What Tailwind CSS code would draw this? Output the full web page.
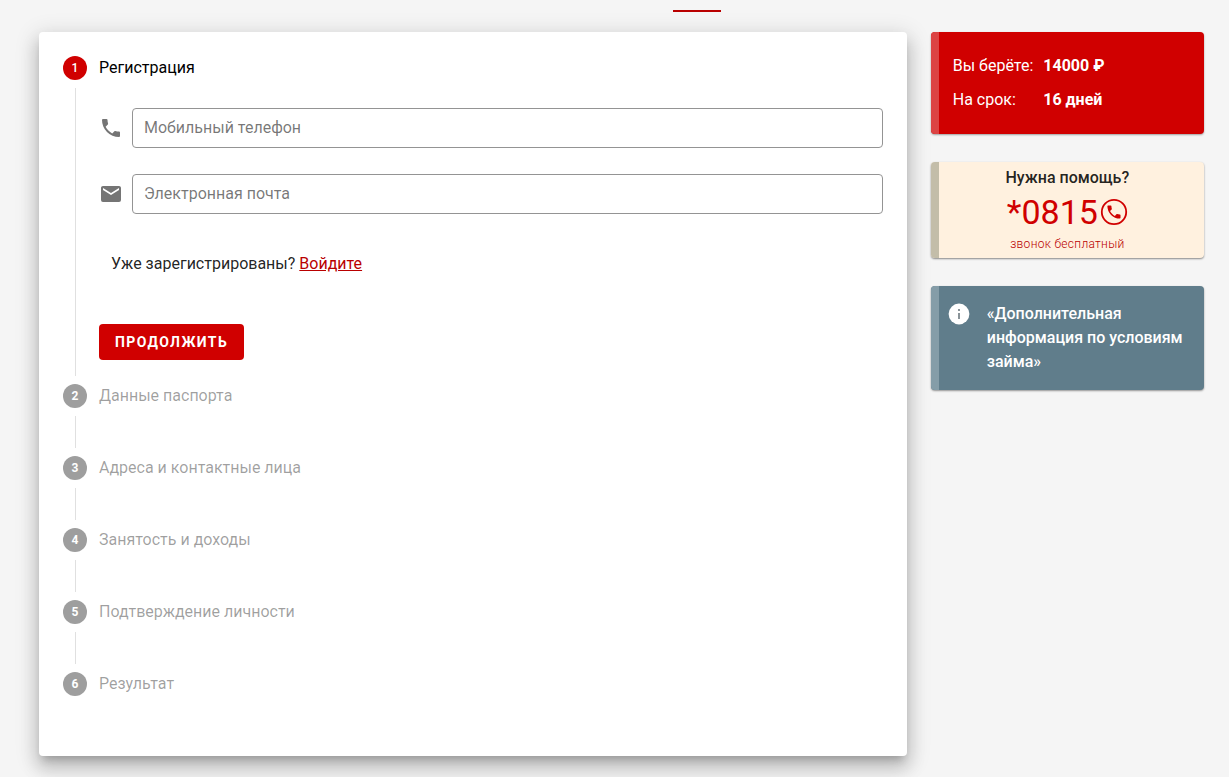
<!DOCTYPE html>
<html lang="ru">
<head>
<meta charset="utf-8">
<meta name="viewport" content="width=device-width, initial-scale=1">
<title>Регистрация</title>
<script src="https://cdn.jsdelivr.net/npm/@tailwindcss/browser@4"></script>
</head>
<body class="min-h-screen bg-[#f5f5f5] font-['Roboto',sans-serif] text-base text-black/87">
<div class="flex h-3 items-end justify-center pl-[165px]" aria-hidden="true">
  <div class="h-0.5 w-12 bg-[#b90000]"></div>
</div>
<div class="grid grid-cols-4 items-start gap-6 pt-5 pr-[25px] pb-5 pl-[39px]">
  <main class="col-span-3 rounded bg-white px-6 pt-6 pb-[60px] shadow-[0_7px_8px_-4px_rgba(0,0,0,0.2),0_12px_17px_2px_rgba(0,0,0,0.14),0_5px_22px_4px_rgba(0,0,0,0.12)]">
    <ol>
      <li class="flex gap-3">
        <div class="flex w-6 shrink-0 flex-col">
          <span class="flex size-6 items-center justify-center rounded-full bg-[#d00000] text-xs font-medium text-white">1</span>
          <span class="my-2 ml-3 w-px flex-1 bg-black/12"></span>
        </div>
        <div class="min-w-0 flex-1 pb-6">
          <h2 class="leading-6 text-black">Регистрация</h2>
          <form>
            <div class="mt-7 flex items-center gap-[9px]">
              <svg class="size-6 shrink-0 fill-[#757575]" viewBox="0 0 24 24" aria-hidden="true"><path d="M6.62 10.79C8.06 13.62 10.38 15.94 13.21 17.38L15.41 15.18C15.69 14.9 16.08 14.82 16.43 14.93C17.55 15.3 18.75 15.5 20 15.5A1 1 0 0 1 21 16.5V20A1 1 0 0 1 20 21A17 17 0 0 1 3 4A1 1 0 0 1 4 3H7.5A1 1 0 0 1 8.5 4C8.5 5.25 8.7 6.45 9.07 7.57C9.18 7.92 9.1 8.31 8.82 8.59L6.62 10.79Z"/></svg>
              <input type="tel" aria-label="Мобильный телефон" placeholder="Мобильный телефон" class="h-10 min-w-0 flex-1 rounded border border-[#949494] px-[11px] pb-0.5 placeholder:text-black/54">
            </div>
            <div class="mt-[26px] flex items-center gap-[9px]">
              <svg class="size-6 shrink-0 fill-[#757575]" viewBox="0 0 24 24" aria-hidden="true"><path d="M20 8L12 13L4 8V6L12 11L20 6M20 4H4C2.89 4 2 4.89 2 6V18A2 2 0 0 0 4 20H20A2 2 0 0 0 22 18V6C22 4.89 21.1 4 20 4Z"/></svg>
              <input type="email" aria-label="Электронная почта" placeholder="Электронная почта" class="h-10 min-w-0 flex-1 rounded border border-[#949494] px-[11px] pb-0.5 placeholder:text-black/54">
            </div>
            <p class="mt-[38px] ml-3 leading-6">Уже зарегистрированы? <a href="#" class="text-[#b90000] underline">Войдите</a></p>
            <button type="submit" class="mt-12 block h-9 rounded bg-[#d00000] px-4 text-sm font-bold tracking-widest text-white uppercase">Продолжить</button>
          </form>
        </div>
      </li>
      <li class="flex h-[72px] gap-3">
        <div class="flex w-6 shrink-0 flex-col">
          <span class="flex size-6 items-center justify-center rounded-full bg-[#9e9e9e] text-xs font-bold text-white">2</span>
          <span class="my-2 ml-3 w-px flex-1 bg-black/12"></span>
        </div>
        <h2 class="leading-6 text-black/38">Данные паспорта</h2>
      </li>
      <li class="flex h-[72px] gap-3">
        <div class="flex w-6 shrink-0 flex-col">
          <span class="flex size-6 items-center justify-center rounded-full bg-[#9e9e9e] text-xs font-bold text-white">3</span>
          <span class="my-2 ml-3 w-px flex-1 bg-black/12"></span>
        </div>
        <h2 class="leading-6 text-black/38">Адреса и контактные лица</h2>
      </li>
      <li class="flex h-[72px] gap-3">
        <div class="flex w-6 shrink-0 flex-col">
          <span class="flex size-6 items-center justify-center rounded-full bg-[#9e9e9e] text-xs font-bold text-white">4</span>
          <span class="my-2 ml-3 w-px flex-1 bg-black/12"></span>
        </div>
        <h2 class="leading-6 text-black/38">Занятость и доходы</h2>
      </li>
      <li class="flex h-[72px] gap-3">
        <div class="flex w-6 shrink-0 flex-col">
          <span class="flex size-6 items-center justify-center rounded-full bg-[#9e9e9e] text-xs font-bold text-white">5</span>
          <span class="my-2 ml-3 w-px flex-1 bg-black/12"></span>
        </div>
        <h2 class="leading-6 text-black/38">Подтверждение личности</h2>
      </li>
      <li class="flex gap-3">
        <span class="flex size-6 items-center justify-center rounded-full bg-[#9e9e9e] text-xs font-bold text-white">6</span>
        <h2 class="leading-6 text-black/38">Результат</h2>
      </li>
    </ol>
  </main>
  <aside class="flex flex-col gap-7">
    <section class="overflow-hidden rounded bg-[#d00000] shadow-[0_1px_2px_rgba(0,0,0,0.35)]">
      <dl class="grid grid-cols-[auto_1fr] gap-[10px] border-l-8 border-[#dc4444] py-[22px] pl-[14px] leading-6 text-white">
        <dt>Вы берёте:</dt><dd class="font-bold">14000 ₽</dd>
        <dt>На срок:</dt><dd class="font-bold">16 дней</dd>
      </dl>
    </section>
    <section class="overflow-hidden rounded bg-[#fff1df] shadow-[0_1px_2px_rgba(0,0,0,0.45)]">
      <div class="flex flex-col items-center border-l-8 border-[#c3bda9] pt-1 pr-2 pb-1">
        <h3 class="leading-6 font-medium">Нужна помощь?</h3>
        <a href="tel:*0815" class="flex h-11 items-center text-[34px] leading-10 text-[#d00000]">*0815<svg class="ml-0.5 size-7" viewBox="0 0 28 28" aria-hidden="true"><circle cx="14" cy="14" r="12.2" fill="none" stroke="currentColor" stroke-width="1.8"/><path transform="translate(5.2 5.2) scale(.73)" fill="currentColor" d="M6.62 10.79C8.06 13.62 10.38 15.94 13.21 17.38L15.41 15.18C15.69 14.9 16.08 14.82 16.43 14.93C17.55 15.3 18.75 15.5 20 15.5A1 1 0 0 1 21 16.5V20A1 1 0 0 1 20 21A17 17 0 0 1 3 4A1 1 0 0 1 4 3H7.5A1 1 0 0 1 8.5 4C8.5 5.25 8.7 6.45 9.07 7.57C9.18 7.92 9.1 8.31 8.82 8.59L6.62 10.79Z"/></svg></a>
        <p class="text-xs leading-5 font-light tracking-wide text-[#b90000]">звонок бесплатный</p>
      </div>
    </section>
    <section class="overflow-hidden rounded bg-[#607d8b] shadow-[0_1px_2px_rgba(0,0,0,0.4)]">
      <div class="flex items-start gap-4 border-l-8 border-[#859da8] py-4 pr-4 pl-2">
        <svg class="size-6 shrink-0 fill-white" viewBox="0 0 24 24" aria-hidden="true"><circle cx="12" cy="12" r="10.4"/><path class="fill-[#8a9499]" d="M11 7h2v2h-2zM11 11h2v6h-2z"/></svg>
        <p class="leading-6 font-medium text-white">«Дополнительная информация по условиям займа»</p>
      </div>
    </section>
  </aside>
</div>
</body>
</html>
